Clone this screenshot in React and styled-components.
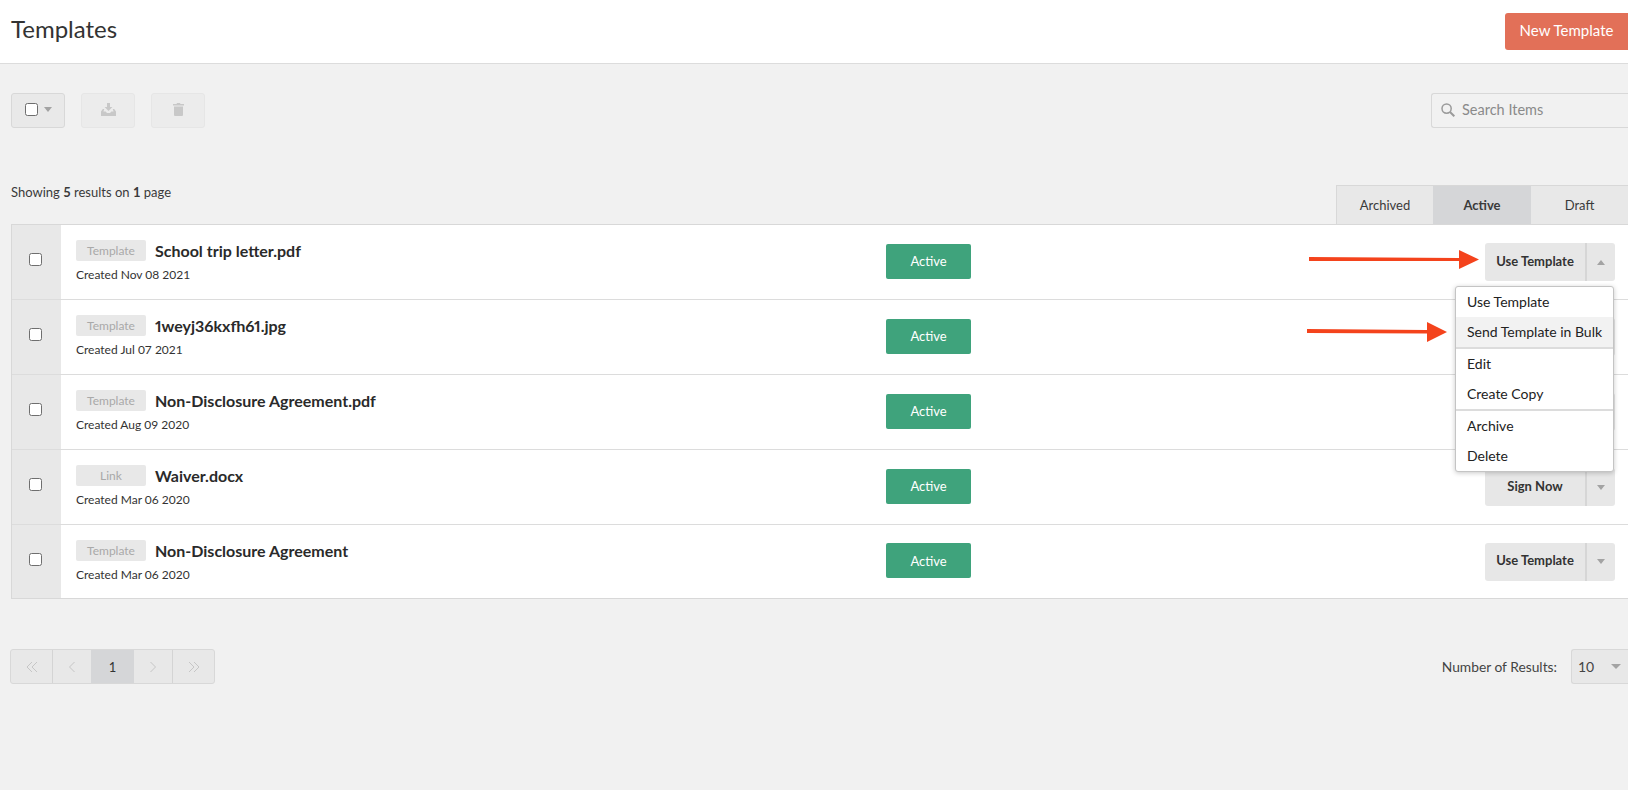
import styled, { createGlobalStyle } from "styled-components";

const GlobalStyle = createGlobalStyle`
  html, body {
    margin: 0;
    padding: 0;
    background: #f1f1f1;
    font-family: "Lato", "Liberation Sans", sans-serif;
    color: #2b2b2b;
    overflow: hidden;
  }
  * { box-sizing: border-box; }
`;

const Page = styled.div`
  position: relative;
  width: 1628px;
  height: 790px;
  overflow: hidden;
`;

const Header = styled.header`
  height: 64px;
  background: #fff;
  border-bottom: 1px solid #dcdcdc;
  display: flex;
  align-items: center;
  justify-content: space-between;
  padding: 0 0 6px 11px;
`;

const Title = styled.h1`
  margin: 0;
  font-size: 24px;
  font-weight: 400;
  color: #333;
`;

const PrimaryButton = styled.button`
  width: 123px;
  height: 37px;
  margin-top: 5px;
  padding: 0 0 2px;
  border: 0;
  border-radius: 3px 0 0 3px;
  background: #e27058;
  color: #fff;
  font: 400 15px "Lato", sans-serif;
`;

const Toolbar = styled.div`
  display: flex;
  align-items: center;
  justify-content: space-between;
  padding: 29px 0 0 11px;
`;

const ToolGroup = styled.div`
  display: flex;
  gap: 16px;
`;

const ToolButton = styled.button`
  width: 54px;
  height: 35px;
  padding: 0 0 2px;
  border-radius: 3px;
  border: 1px solid ${({ $on }) => ($on ? "#d8d8d8" : "#e6e6e6")};
  background: ${({ $on }) => ($on ? "#e9e9e9" : "#ececec")};
  display: flex;
  align-items: center;
  justify-content: center;
  gap: 6px;
`;

const CheckBox = styled.span`
  display: block;
  width: 13px;
  height: 13px;
  background: #fff;
  border: 1px solid #6e6e6e;
  border-radius: 2.5px;
`;

const Caret = styled.span`
  display: block;
  width: 0;
  height: 0;
  border-left: ${({ $w }) => $w || 4}px solid transparent;
  border-right: ${({ $w }) => $w || 4}px solid transparent;
  border-${({ $up }) => ($up ? "bottom" : "top")}: 5px solid #a3a3a3;
`;

const Search = styled.div`
  width: 197px;
  height: 35px;
  border: 1px solid #d8d8d8;
  border-right: 0;
  border-radius: 3px 0 0 3px;
  display: flex;
  align-items: center;
  gap: 7px;
  padding: 0 0 2px 9px;
  color: #8a8a8a;
  font-size: 14.5px;
`;

const ResultBar = styled.div`
  display: flex;
  align-items: flex-end;
  justify-content: space-between;
  margin-top: 56px;
  padding-left: 11px;
`;

const Showing = styled.div`
  font-size: 13px;
  color: #3a3a3a;
  padding-bottom: 24px;
  b { font-weight: 700; }
`;

const Tabs = styled.div`
  display: grid;
  grid-template-columns: 96px 98px 97px;
  height: 39px;
  border: 1px solid #d8d8d8;
  border-width: 1px 0 0 1px;
`;

const Tab = styled.div`
  display: flex;
  align-items: center;
  justify-content: center;
  font-size: 13px;
  font-weight: ${({ $active }) => ($active ? 700 : 400)};
  color: #3a3a3a;
  background: ${({ $active }) => ($active ? "#d5d6d8" : "#e8e8e8")};
`;

const Table = styled.div`
  margin-left: 11px;
  border: 1px solid #d8d8d8;
  border-right: 0;
`;

const Row = styled.div`
  display: grid;
  grid-template-columns: 49px 825px 85px 1fr;
  height: ${({ $h }) => $h}px;
  background: #fff;
  border-bottom: 1px solid #dcdcdc;
  &:last-child { border-bottom: 0; }
`;

const SelectCell = styled.div`
  background: #e8e8e8;
  display: flex;
  align-items: center;
  justify-content: center;
  padding: 0 2px 5px 0;
`;

const Info = styled.div`
  padding: 15px 0 0 15px;
`;

const NameLine = styled.div`
  display: flex;
  align-items: center;
  gap: 9px;
`;

const TypeTag = styled.span`
  width: 70px;
  height: 21px;
  border-radius: 2px;
  background: #e8e8e8;
  color: #a9a9a9;
  font-size: 12px;
  display: flex;
  align-items: center;
  justify-content: center;
`;

const Name = styled.span`
  font-size: 16px;
  font-weight: 700;
  font-variant-numeric: proportional-nums;
  color: #2a2a2a;
`;

const Created = styled.div`
  margin-top: 6px;
  font-size: 12px;
  color: #333;
`;

const StatusCell = styled.div`
  display: flex;
  align-items: center;
  padding-bottom: 2px;
`;

const Status = styled.div`
  width: 85px;
  height: 35px;
  border-radius: 2px;
  background: #3fa37c;
  color: #fff;
  font-size: 13px;
  display: flex;
  align-items: center;
  justify-content: center;
`;

const ActionCell = styled.div`
  display: flex;
  align-items: center;
  justify-content: flex-end;
  padding-right: 13px;
`;

const Split = styled.div`
  display: grid;
  grid-template-columns: 102px 1fr;
  width: 130px;
  height: 38px;
  border-radius: 3px;
  background: #e7e7e7;
`;

const SplitMain = styled.div`
  display: flex;
  align-items: center;
  justify-content: center;
  padding-bottom: 3px;
  border-right: 2px solid #d6d6d6;
  font-size: 13px;
  font-weight: 700;
  color: #333;
`;

const SplitCaret = styled.div`
  display: flex;
  align-items: center;
  justify-content: center;
`;

const Menu = styled.div`
  position: absolute;
  left: 1455px;
  top: 286px;
  width: 159px;
  background: #fff;
  border: 1px solid #c4c4c4;
  border-radius: 3px;
  box-shadow: 0 1px 5px rgba(0, 0, 0, 0.22);
  font-size: 14px;
  color: #222;
`;

const MenuGroup = styled.div`
  & + & { border-top: 2px solid #dcdcdc; }
`;

const MenuItem = styled.div`
  height: 30px;
  padding: 0 0 2px 11px;
  display: flex;
  align-items: center;
  white-space: nowrap;
  background: ${({ $hover }) => ($hover ? "#f2f2f2" : "transparent")};
`;

const Footer = styled.div`
  display: flex;
  align-items: center;
  justify-content: space-between;
  margin: 50px 0 0 10px;
`;

const Pager = styled.div`
  display: flex;
  height: 35px;
  border: 1px solid #d8d8d8;
  border-radius: 3px;
  background: #e8e8e8;
`;

const PageCell = styled.div`
  width: ${({ $w }) => $w}px;
  display: flex;
  align-items: center;
  justify-content: center;
  font-size: 13px;
  color: #333;
  background: ${({ $active }) => ($active ? "#d5d6d8" : "transparent")};
  border-left: ${({ $line }) => ($line ? "1px solid #d4d4d4" : "0")};
  svg {
    width: 14px;
    height: 14px;
    fill: none;
    stroke: #c6c6c6;
    stroke-width: 1;
  }
`;

const PerPage = styled.div`
  display: flex;
  align-items: center;
  gap: 14px;
  font-size: 13.8px;
  color: #444;
`;

const PerPageSelect = styled.div`
  width: 57px;
  height: 35px;
  border: 1px solid #d8d8d8;
  border-right: 0;
  border-radius: 3px 0 0 3px;
  background: #e8e8e8;
  display: flex;
  align-items: center;
  justify-content: space-between;
  padding: 0 7px 0 6px;
  font-size: 14px;
`;

const ArrowSvg = styled.svg`
  position: absolute;
  left: 0;
  top: 0;
  pointer-events: none;
`;

const rows = [
  { type: "Template", name: "School trip letter.pdf", date: "Nov 08 2021", action: "Use Template", open: true, h: 75 },
  { type: "Template", name: "1weyj36kxfh61.jpg", date: "Jul 07 2021", action: "Use Template", h: 75 },
  { type: "Template", name: "Non-Disclosure Agreement.pdf", date: "Aug 09 2020", action: "Use Template", h: 75 },
  { type: "Link", name: "Waiver.docx", date: "Mar 06 2020", action: "Sign Now", h: 75 },
  { type: "Template", name: "Non-Disclosure Agreement", date: "Mar 06 2020", action: "Use Template", h: 73 },
];

const Chevron = ({ dir, double }) => (
  <svg viewBox="0 0 14 14">
    {double ? (
      <path d={dir === "left" ? "M7 2 2 7l5 5M12 2 7 7l5 5" : "M2 2l5 5-5 5M7 2l5 5-5 5"} />
    ) : (
      <path d={dir === "left" ? "M9.5 2 4.5 7l5 5" : "M4.5 2l5 5-5 5"} />
    )}
  </svg>
);

export default function App() {
  return (
    <Page>
      <GlobalStyle />
      <Header>
        <Title>Templates</Title>
        <PrimaryButton>New Template</PrimaryButton>
      </Header>

      <Toolbar>
        <ToolGroup>
          <ToolButton $on>
            <CheckBox />
            <Caret />
          </ToolButton>
          <ToolButton>
            <svg width="15" height="13" viewBox="0 0 15 13" fill="#c8c8c8">
              <path d="M6 0h3v4h2.4L7.5 8 3.6 4H6z" />
              <path d="M0 8.5 1.8 6h1.5l-.9 2.5h2.2L6 10h3l1.4-1.5h2.2L11.7 6h1.5L15 8.5V13H0z" />
            </svg>
          </ToolButton>
          <ToolButton>
            <svg width="11" height="13" viewBox="0 0 11 13" fill="#c8c8c8">
              <path d="M4 0h3l.5 1H11v1.5H0V1h3.5z" />
              <path d="M1 3.5h9V12a1 1 0 0 1-1 1H2a1 1 0 0 1-1-1z" />
            </svg>
          </ToolButton>
        </ToolGroup>
        <Search>
          <svg width="14" height="14" viewBox="0 0 14 14" fill="none" stroke="#9a9a9a" strokeWidth="1.5">
            <circle cx="5.6" cy="5.6" r="4.6" />
            <path d="M9 9l4.3 4.3" strokeWidth="2" />
          </svg>
          Search Items
        </Search>
      </Toolbar>

      <ResultBar>
        <Showing>
          Showing <b>5</b> results on <b>1</b> page
        </Showing>
        <Tabs>
          <Tab>Archived</Tab>
          <Tab $active>Active</Tab>
          <Tab>Draft</Tab>
        </Tabs>
      </ResultBar>

      <Table>
        {rows.map((row) => (
          <Row key={row.name} $h={row.h}>
            <SelectCell>
              <CheckBox />
            </SelectCell>
            <Info>
              <NameLine>
                <TypeTag>{row.type}</TypeTag>
                <Name>{row.name}</Name>
              </NameLine>
              <Created>Created {row.date}</Created>
            </Info>
            <StatusCell>
              <Status>Active</Status>
            </StatusCell>
            <ActionCell>
              <Split>
                <SplitMain>{row.action}</SplitMain>
                <SplitCaret>
                  <Caret $up={row.open} />
                </SplitCaret>
              </Split>
            </ActionCell>
          </Row>
        ))}
      </Table>

      <Footer>
        <Pager>
          <PageCell $w={41}><Chevron dir="left" double /></PageCell>
          <PageCell $w={39} $line><Chevron dir="left" /></PageCell>
          <PageCell $w={43} $active>1</PageCell>
          <PageCell $w={38}><Chevron dir="right" /></PageCell>
          <PageCell $w={42} $line><Chevron dir="right" double /></PageCell>
        </Pager>
        <PerPage>
          Number of Results:
          <PerPageSelect>
            10
            <Caret $w={5} />
          </PerPageSelect>
        </PerPage>
      </Footer>

      <Menu>
        <MenuGroup>
          <MenuItem>Use Template</MenuItem>
          <MenuItem $hover>Send Template in Bulk</MenuItem>
        </MenuGroup>
        <MenuGroup>
          <MenuItem>Edit</MenuItem>
          <MenuItem>Create Copy</MenuItem>
        </MenuGroup>
        <MenuGroup>
          <MenuItem>Archive</MenuItem>
          <MenuItem>Delete</MenuItem>
        </MenuGroup>
      </Menu>

      <ArrowSvg width="1628" height="790">
        <path d="M1309 257 1459 258V250L1479 259.5 1459 269V261L1309 261z" fill="#f4431c" />
        <path d="M1307 329 1427 330V322L1447 332 1427 342V333.5L1307 333z" fill="#f4431c" />
      </ArrowSvg>
    </Page>
  );
}
